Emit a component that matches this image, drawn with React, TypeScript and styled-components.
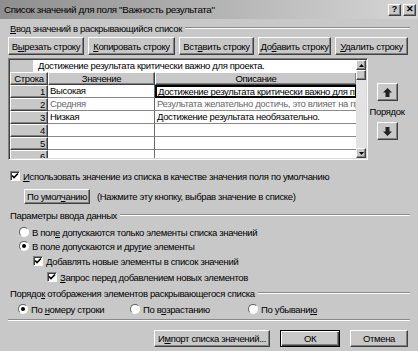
import React from "react";
import styled, { createGlobalStyle, css } from "styled-components";

const Global = createGlobalStyle`
  html, body { margin: 0; padding: 0; }
  body {
    background: #c8c8c8;
    font-family: "Liberation Sans", Arial, sans-serif;
    font-size: 9.5px;
    letter-spacing: -0.35px;
    color: #000;
  }
  u { text-decoration: underline; text-underline-offset: 1px; }
`;

const raised = css`
  border: 1px solid;
  border-color: #ffffff #404040 #404040 #ffffff;
  box-shadow: inset -1px -1px 0 #808080;
`;

const sunken = css`
  border: 1px solid;
  border-color: #808080 #ffffff #ffffff #808080;
  box-shadow: inset 1px 1px 0 #404040;
`;

const Window = styled.div`
  width: 418px;
  height: 351px;
  background: #c8c8c8;
  display: flex;
  flex-direction: column;
  overflow: hidden;
`;

const TitleBar = styled.div`
  height: 19px;
  flex: none;
  display: flex;
  align-items: center;
  gap: 2px;
  padding: 0 2px 0 4px;
  background: linear-gradient(to right, #8e8e8e, #d6d6d6);
`;

const TitleText = styled.div`
  flex: 1;
  white-space: nowrap;
  font-size: 9.8px;
`;

const CaptionBtn = styled.div`
  width: 13px;
  height: 12px;
  box-sizing: border-box;
  ${raised};
  background: #c8c8c8;
  display: flex;
  align-items: center;
  justify-content: center;
  font-weight: bold;
  font-size: 9px;
  line-height: 1;
  letter-spacing: 0;
`;

const Body = styled.div`
  flex: 1;
  display: flex;
  flex-direction: column;
  padding: 0 8px;
`;

const GroupHeader = styled.div<{ $mt: number }>`
  display: flex;
  align-items: center;
  height: 12px;
  margin-top: ${(p) => p.$mt}px;
  padding-left: 2px;
  gap: 3px;
  white-space: nowrap;
`;

const EtchedLine = styled.div`
  flex: 1;
  height: 0;
  border-top: 1px solid #8a8a8a;
  border-bottom: 1px solid #ffffff;
`;

const ButtonRow = styled.div`
  display: flex;
  gap: 4px;
  margin-top: 3px;
`;

const Btn = styled.button<{ $w: number; $h?: number; $default?: boolean }>`
  width: ${(p) => p.$w}px;
  height: ${(p) => p.$h ?? 18}px;
  box-sizing: border-box;
  padding: 0;
  margin: 0;
  font: inherit;
  letter-spacing: inherit;
  color: #000;
  background: #c8c8c8;
  white-space: nowrap;
  flex: none;
  ${raised};
  ${(p) =>
    p.$default &&
    css`
      border: 1px solid #000;
      box-shadow: inset 1px 1px 0 #fff, inset -1px -1px 0 #404040,
        inset -2px -2px 0 #808080;
    `}
`;

const GridWrap = styled.div`
  display: flex;
  margin-top: 3px;
`;

const GridFrame = styled.div`
  width: 360px;
  height: 102px;
  box-sizing: border-box;
  border: 1px solid;
  border-color: #808080 #ffffff #ffffff #808080;
  box-shadow: inset 1px 1px 0 #404040, inset -1px -1px 0 #d8d8d8;
  padding: 1px;
  display: flex;
`;

const Table = styled.div`
  flex: 1;
  display: flex;
  flex-direction: column;
  overflow: hidden;
  background: #c8c8c8;
`;

const EditRow = styled.div`
  display: flex;
  height: 12px;
  flex: none;
`;

const Corner = styled.div`
  width: 23px;
  background: #c8c8c8;
`;

const EditField = styled.div`
  flex: 1;
  background: #fff;
  padding-left: 5px;
  line-height: 12px;
  white-space: nowrap;
`;

const Row = styled.div`
  display: grid;
  grid-template-columns: 38px 107px 202px;
  height: 13px;
  flex: none;
`;

const HeadCell = styled.div`
  box-sizing: border-box;
  ${raised};
  background: #c8c8c8;
  text-align: center;
  line-height: 11px;
  white-space: nowrap;
`;

const NumCell = styled.div`
  box-sizing: border-box;
  ${raised};
  background: #c8c8c8;
  text-align: right;
  padding-right: 2px;
  line-height: 11px;
`;

const Cell = styled.div<{ $dim?: boolean; $current?: boolean }>`
  box-sizing: border-box;
  background: #fff;
  border-right: 1px solid #6a6a6a;
  border-bottom: 1px solid #8a8a8a;
  padding-left: 2px;
  line-height: 12px;
  white-space: nowrap;
  overflow: hidden;
  color: ${(p) => (p.$dim ? "#6a6a6a" : "#000")};
  ${(p) =>
    p.$current &&
    css`
      border: 2px solid #000;
      line-height: 9px;
      padding-left: 1px;
    `}
`;

const Scrollbar = styled.div`
  width: 10px;
  display: flex;
  flex-direction: column;
  background: #e2e2e2;
`;

const ScrollBtn = styled.div`
  height: 10px;
  box-sizing: border-box;
  ${raised};
  background: #c8c8c8;
  display: flex;
  align-items: center;
  justify-content: center;
`;

const Thumb = styled.div`
  height: 10px;
  box-sizing: border-box;
  ${raised};
  background: #c8c8c8;
`;

const Track = styled.div`
  flex: 1;
`;

const OrderPanel = styled.div`
  flex: 1;
  display: flex;
  flex-direction: column;
  align-items: center;
  padding-top: 25px;
  padding-right: 4px;
`;

const OrderBtn = styled.div`
  width: 21px;
  height: 18px;
  box-sizing: border-box;
  ${raised};
  background: #c8c8c8;
  display: flex;
  align-items: center;
  justify-content: center;
`;

const OrderLabel = styled.div`
  margin: 5px 0 5px;
  line-height: 11px;
  white-space: nowrap;
`;

const OptionRow = styled.div<{ $mt: number; $indent: number }>`
  display: flex;
  align-items: center;
  gap: 3px;
  height: 12px;
  margin-top: ${(p) => p.$mt}px;
  padding-left: ${(p) => p.$indent}px;
  white-space: nowrap;
`;

const Box = styled.div`
  width: 10px;
  height: 10px;
  box-sizing: border-box;
  background: #fff;
  ${sunken};
  display: flex;
  align-items: center;
  justify-content: center;
  flex: none;
`;

const Circle = styled.div`
  width: 10px;
  height: 10px;
  box-sizing: border-box;
  border-radius: 50%;
  background: #fff;
  border: 1px solid;
  border-color: #606060 #ffffff #ffffff #606060;
  display: flex;
  align-items: center;
  justify-content: center;
  flex: none;
`;

const Dot = styled.div`
  width: 4px;
  height: 4px;
  border-radius: 50%;
  background: #000;
`;

const DefaultRow = styled.div`
  display: flex;
  align-items: center;
  margin-top: 7px;
  padding-left: 16px;
  gap: 7px;
  white-space: nowrap;
`;

const OrderOptions = styled.div`
  display: grid;
  grid-template-columns: 112px 118px auto;
  margin-top: 4px;
  padding-left: 10px;
  height: 12px;
  align-items: center;
`;

const Option = styled.div`
  display: flex;
  align-items: center;
  gap: 3px;
  white-space: nowrap;
`;

const Separator = styled.div`
  margin-top: 4px;
  border-top: 1px solid #8a8a8a;
  border-bottom: 1px solid #ffffff;
`;

const Footer = styled.div`
  display: flex;
  justify-content: flex-end;
  gap: 10px;
  margin-top: 9px;
  padding-right: 2px;
`;

const Check = () => (
  <svg width="8" height="8" viewBox="0 0 8 8">
    <path d="M1 3.5 L3 5.5 L7 1.5" stroke="#000" strokeWidth="1.6" fill="none" />
  </svg>
);

const CheckBox = ({ checked }: { checked?: boolean }) => (
  <Box>{checked && <Check />}</Box>
);

const Radio = ({ checked }: { checked?: boolean }) => (
  <Circle>{checked && <Dot />}</Circle>
);

const Arrow = ({ down }: { down?: boolean }) => (
  <svg width="9" height="9" viewBox="0 0 9 9" style={down ? { transform: "rotate(180deg)" } : undefined}>
    <polygon points="4.5,0 9,4.5 6.5,4.5 6.5,9 2.5,9 2.5,4.5 0,4.5" fill="#222" />
  </svg>
);

const Tri = ({ down }: { down?: boolean }) => (
  <svg width="5" height="3" viewBox="0 0 5 3">
    <polygon points={down ? "0,0 5,0 2.5,3" : "0,3 5,3 2.5,0"} fill="#000" />
  </svg>
);

const rows = [
  { n: 1, v: "Высокая", d: "Достижение результата критически важно для проекта.", current: true },
  { n: 2, v: "Средняя", d: "Результата желательно достичь, это влияет на проект.", dim: true },
  { n: 3, v: "Низкая", d: "Достижение результата необязательно." },
  { n: 4, v: "", d: "" },
  { n: 5, v: "", d: "" },
  { n: 6, v: "", d: "" },
];

export default function App() {
  return (
    <>
      <Global />
      <Window>
        <TitleBar>
          <TitleText>Список значений для поля "Важность результата"</TitleText>
          <CaptionBtn>?</CaptionBtn>
          <CaptionBtn>✕</CaptionBtn>
        </TitleBar>
        <Body>
          <GroupHeader $mt={3}>
            <span>
              <u>В</u>вод значений в раскрывающийся список
            </span>
            <EtchedLine />
          </GroupHeader>
          <ButtonRow>
            <Btn $w={76}>
              В<u>ы</u>резать строку
            </Btn>
            <Btn $w={87}>
              <u>К</u>опировать строку
            </Btn>
            <Btn $w={75}>
              Вст<u>а</u>вить строку
            </Btn>
            <Btn $w={73}>
              До<u>б</u>авить строку
            </Btn>
            <Btn $w={73}>
              <u>У</u>далить строку
            </Btn>
          </ButtonRow>
          <GridWrap>
            <GridFrame>
              <Table>
                <EditRow>
                  <Corner />
                  <EditField>Достижение результата критически важно для проекта.</EditField>
                </EditRow>
                <Row>
                  <HeadCell>Строка</HeadCell>
                  <HeadCell>Значение</HeadCell>
                  <HeadCell>Описание</HeadCell>
                </Row>
                {rows.map((r) => (
                  <Row key={r.n}>
                    <NumCell>{r.n}</NumCell>
                    <Cell $dim={r.dim}>{r.v}</Cell>
                    <Cell $dim={r.dim} $current={r.current}>
                      {r.d}
                    </Cell>
                  </Row>
                ))}
              </Table>
              <Scrollbar>
                <ScrollBtn>
                  <Tri />
                </ScrollBtn>
                <Thumb />
                <Track />
                <ScrollBtn>
                  <Tri down />
                </ScrollBtn>
              </Scrollbar>
            </GridFrame>
            <OrderPanel>
              <OrderBtn>
                <Arrow />
              </OrderBtn>
              <OrderLabel>Порядок</OrderLabel>
              <OrderBtn>
                <Arrow down />
              </OrderBtn>
            </OrderPanel>
          </GridWrap>
          <OptionRow $mt={10} $indent={2}>
            <CheckBox checked />
            <span>
              <u>И</u>спользовать значение из списка в качестве значения поля по умолчанию
            </span>
          </OptionRow>
          <DefaultRow>
            <Btn $w={66} $h={15}>
              По умол<u>ч</u>анию
            </Btn>
            <span>(Нажмите эту кнопку, выбрав значение в списке)</span>
          </DefaultRow>
          <GroupHeader $mt={5}>
            <span>Параметры ввода данных</span>
            <EtchedLine />
          </GroupHeader>
          <OptionRow $mt={5} $indent={11}>
            <Radio />
            <span>
              В пол<u>е</u> допускаются только элементы списка значений
            </span>
          </OptionRow>
          <OptionRow $mt={2} $indent={11}>
            <Radio checked />
            <span>
              В поле допускаются и дру<u>г</u>ие элементы
            </span>
          </OptionRow>
          <OptionRow $mt={3} $indent={25}>
            <CheckBox checked />
            <span>
              <u>Д</u>обавлять новые элементы в список значений
            </span>
          </OptionRow>
          <OptionRow $mt={4} $indent={39}>
            <CheckBox checked />
            <span>
              <u>З</u>апрос перед добавлением новых элементов
            </span>
          </OptionRow>
          <GroupHeader $mt={4}>
            <span>
              Порядо<u>к</u> отображения элементов раскрывающегося списка
            </span>
            <EtchedLine />
          </GroupHeader>
          <OrderOptions>
            <Option>
              <Radio checked />
              <span>
                По <u>н</u>омеру строки
              </span>
            </Option>
            <Option>
              <Radio />
              <span>
                По в<u>о</u>зрастанию
              </span>
            </Option>
            <Option>
              <Radio />
              <span>
                По убывани<u>ю</u>
              </span>
            </Option>
          </OrderOptions>
          <Separator />
          <Footer>
            <Btn $w={116} $h={17}>
              И<u>м</u>порт списка значений...
            </Btn>
            <Btn $w={60} $h={17} $default>
              ОК
            </Btn>
            <Btn $w={58} $h={17}>
              Отмена
            </Btn>
          </Footer>
        </Body>
      </Window>
    </>
  );
}
